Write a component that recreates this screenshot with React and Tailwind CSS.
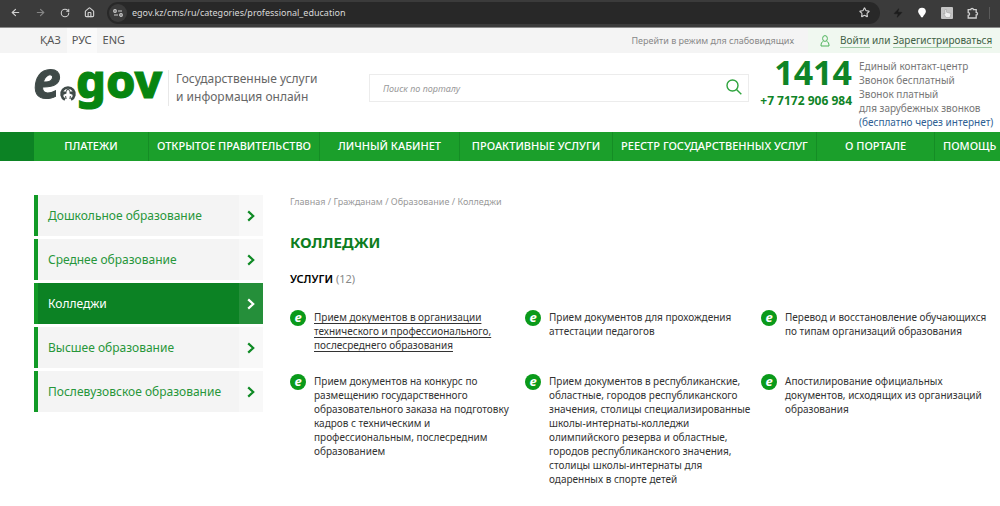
import React from "react";
import { ArrowLeft, ArrowRight, RotateCw, House, Star, Zap } from "lucide-react";

const NAV = [
  "ПЛАТЕЖИ",
  "ОТКРЫТОЕ ПРАВИТЕЛЬСТВО",
  "ЛИЧНЫЙ КАБИНЕТ",
  "ПРОАКТИВНЫЕ УСЛУГИ",
  "РЕЕСТР ГОСУДАРСТВЕННЫХ УСЛУГ",
  "О ПОРТАЛЕ",
  "ПОМОЩЬ",
];

const CATEGORIES = [
  "Дошкольное образование",
  "Среднее образование",
  "Колледжи",
  "Высшее образование",
  "Послевузовское образование",
];

const SERVICES = [
  ["Прием документов в организации", "технического и профессионального,", "послесреднего образования"],
  ["Прием документов для прохождения", "аттестации педагогов"],
  ["Перевод и восстановление обучающихся", "по типам организаций образования"],
  [
    "Прием документов на конкурс по",
    "размещению государственного",
    "образовательного заказа на подготовку",
    "кадров с техническим и",
    "профессиональным, послесредним",
    "образованием",
  ],
  [
    "Прием документов в республиканские,",
    "областные, городов республиканского",
    "значения, столицы специализированные",
    "школы-интернаты-колледжи",
    "олимпийского резерва и областные,",
    "городов республиканского значения,",
    "столицы школы-интернаты для",
    "одаренных в спорте детей",
  ],
  ["Апостилирование официальных", "документов, исходящих из организаций", "образования"],
];

function BrowserBar() {
  return (
    <div className="flex h-7 items-center border-b border-[#8a8a8a] bg-[#3b3b3b] pb-[2px] pl-[10px] text-[#d0d0d0]">
      <div className="flex w-[97px] items-center gap-[14px]">
        <button aria-label="Назад"><ArrowLeft size={11} strokeWidth={2.5} /></button>
        <button aria-label="Вперед" className="text-[#858585]"><ArrowRight size={11} strokeWidth={2.5} /></button>
        <button aria-label="Обновить"><RotateCw size={10} strokeWidth={2.5} /></button>
        <button aria-label="Домой"><House size={11} strokeWidth={2.5} /></button>
      </div>
      <div className="flex h-[22px] flex-1 items-center rounded-full bg-[#282828] pr-[10px] pl-[2px]">
        <button aria-label="Сведения о сайте" className="flex size-[18px] items-center justify-center rounded-full bg-[#3b3b3b]">
          <svg width="10" height="8" viewBox="0 0 10 8" fill="none" stroke="currentColor" strokeWidth="1.200">
            <circle cx="2" cy="2" r="1.300" />
            <path d="M5 2h4M1 6h4" />
            <circle cx="8" cy="6" r="1.300" />
          </svg>
        </button>
        <input
          aria-label="Адресная строка"
          readOnly
          value="egov.kz/cms/ru/categories/professional_education"
          className="ml-[5px] min-w-0 flex-1 bg-transparent text-[9px] text-[#d8d8d8] outline-none"
        />
        <button aria-label="Добавить в закладки"><Star size={11} strokeWidth={2.5} /></button>
      </div>
      <div className="flex w-[120px] items-center gap-[14px] pl-[13px]">
        <button aria-label="Ускорение" className="text-[#1c1c1c]"><Zap size={10} fill="currentColor" strokeWidth={1} /></button>
        <button aria-label="Местоположение">
          <svg width="10" height="11" viewBox="0 0 10 11" fill="#fff">
            <path d="M5 .8A3.900 3.900 0 0 0 1.100 4.600C1.100 6.800 3.700 8.200 4.100 10.300h1.800C6.300 8.200 8.900 6.800 8.900 4.600A3.900 3.900 0 0 0 5 .8z" />
          </svg>
        </button>
        <button aria-label="Жест">
          <svg width="12" height="12" viewBox="0 0 12 12">
            <rect width="12" height="12" rx="1" fill="#c4c4c4" />
            <path d="M4 2.500v4.500L2.500 6.500 5 10.500h4l1-4-4.500-1.300V2.500z" fill="#efefef" stroke="#999" strokeWidth=".5" />
          </svg>
        </button>
        <button aria-label="Расширения">
          <svg width="12" height="12" viewBox="0 0 12 12" fill="none" stroke="currentColor" strokeWidth="1.300">
            <path d="M1.200 2.600h2.600a1.300 1.300 0 0 1 2.600 0h2.800v2.800a1.300 1.300 0 0 1 0 2.600v3H1.200V8.400a1.400 1.400 0 0 0 0-2.800z" />
          </svg>
        </button>
        <span className="-ml-1 h-3 w-px bg-[#5a5a5a]" />
      </div>
    </div>
  );
}

function TopStrip() {
  return (
    <div className="flex h-[25px] items-stretch bg-[#f4f4f4] text-[11px] text-[#555]">
      <div className="flex items-center gap-px pl-[35px]">
        <a href="#kaz" className="px-[5px]">ҚАЗ</a>
        <a href="#rus" className="flex h-full items-center bg-[#fafafa] px-[5px]">РУС</a>
        <a href="#eng" className="px-[5px]">ENG</a>
      </div>
      <a href="#access" className="ml-auto flex items-center pr-[14px] text-[9px] text-[#888]">
        Перейти в режим для слабовидящих
      </a>
      <div className="flex w-[192px] items-center bg-[#f0f8f0] pl-[12px] text-[10px] text-[#3f5f45]">
        <svg width="10" height="12" viewBox="0 0 10 12" fill="none" stroke="#4db35a" strokeWidth="1">
          <ellipse cx="5" cy="3.500" rx="2.400" ry="2.900" />
          <path d="M3.400 6.200C1.800 7 1 8 1 11h8c0-3-.8-4-2.400-4.800" />
        </svg>
        <span className="ml-[10px] whitespace-nowrap">
          <a href="#login" className="border-b border-[#9fc9a5]">Войти</a> или{" "}
          <a href="#register" className="border-b border-[#9fc9a5]">Зарегистрироваться</a>
        </span>
      </div>
    </div>
  );
}

function Logo() {
  return (
    <svg width="128" height="50" viewBox="0 0 128 50" className="overflow-visible" role="img" aria-label="e.gov">
      <text x="-1" y="35" fontFamily="'Noto Sans'" fontWeight="700" fontStyle="italic" fontSize="50" fill="#3f4a48" stroke="#3f4a48" strokeWidth="1">e</text>
      <path
        d="M31 36.700A6.500 6.500 0 1 1 37 36.700"
        fill="none"
        stroke="#3f4a48"
        strokeWidth="2.600"
      />
      <path d="M28.500 28.500h3.300l1-2.500h2.400l1 2.500h3.300l.5 4-3 .5-.6 3h-4.800l-.6-3-3-.5z" fill="#3f4a48" />
      <path d="M34 26.500l1.500 2v2l3 1.200v1l-2.700.5-.6 4.300h-2.400l-.6-4.300-2.700-.5v-1l3-1.200v-2z" fill="#fff" />
      <text x="42" y="35" fontFamily="'Noto Sans'" fontWeight="800" fontSize="47" fill="#078510" stroke="#078510" strokeWidth="1">gov</text>
    </svg>
  );
}

function Header() {
  return (
    <header className="flex h-[79px] items-start pl-[34px]">
      <div className="flex w-[335px] items-center pt-[10px]">
        <a href="#home"><Logo /></a>
        <p className="ml-[6px] border-l border-[#e8e8e8] pl-[7px] text-[12px] leading-[18px] text-[#666]">
          Государственные услуги
          <br />
          и информация онлайн
        </p>
      </div>
      <form className="mt-[21px] flex h-7 flex-1 items-start border border-[#ececec] pt-1 pr-[6px] pl-[13px]">
        <input
          aria-label="Поиск по порталу"
          placeholder="Поиск по порталу"
          className="h-[18px] min-w-0 flex-1 bg-transparent text-[9px] italic outline-none placeholder:text-[#999]"
        />
        <button type="button" aria-label="Найти" className="text-[#2fa43e]">
          <svg width="16" height="16" viewBox="0 0 16 16" fill="none" stroke="currentColor" strokeWidth="1.400">
            <circle cx="6.500" cy="6.500" r="5.500" />
            <path d="M10.500 10.500l4.800 4.800" />
          </svg>
        </button>
      </form>
      <div className="flex w-[251px] gap-[7px] pl-[10px]">
        <div className="w-[93px] text-right font-bold whitespace-nowrap text-[#0f8427]">
          <div className="text-[34px] leading-[38px]">1414</div>
          <div className="text-[12px] leading-[20px]">+7 7172 906 984</div>
        </div>
        <p className="pt-[6px] text-[10px] leading-[14px] whitespace-nowrap text-[#777]">
          Единый контакт-центр
          <br />
          Звонок бесплатный
          <br />
          Звонок платный
          <br />
          для зарубежных звонков
          <br />
          <a href="#call" className="text-[#2f5f94]">(бесплатно через интернет)</a>
        </p>
      </div>
    </header>
  );
}

function Nav() {
  return (
    <nav className="grid h-[29px] grid-cols-[34fr_115fr_171fr_140fr_153fr_204fr_118fr_65fr] bg-[#1b9f2b] text-[11px] font-medium text-white">
      <span className="bg-[#0c8224]" />
      {NAV.map((item) => (
        <a
          key={item}
          href="#nav"
          className="flex min-w-0 items-center justify-center border-r border-[#158d25] whitespace-nowrap last:justify-start last:border-r-0 last:pl-2"
        >
          {item}
        </a>
      ))}
    </nav>
  );
}

function Sidebar() {
  return (
    <aside className="flex w-[229px] flex-col gap-[3px]">
      {CATEGORIES.map((name) => {
        const active = name === "Колледжи";
        return (
          <a
            key={name}
            href="#category"
            className={
              "flex h-[41px] items-center border-l-4 border-[#119a26] pl-[10px] text-[12px] " +
              (active ? "bg-[#0c8224] text-white" : "bg-[#f4f4f4] text-[#27963a]")
            }
          >
            <span className="flex-1 whitespace-nowrap">{name}</span>
            <span
              className={
                "flex h-full w-6 items-center justify-center " +
                (active ? "bg-[#258f3a] text-white" : "bg-[#f8f8f8] text-[#0f8a25]")
              }
            >
              <svg width="8" height="12" viewBox="0 0 8 12" fill="none" stroke="currentColor" strokeWidth="2.200">
                <path d="M1.200 1.400L6.200 6l-5 4.600" />
              </svg>
            </span>
          </a>
        );
      })}
    </aside>
  );
}

function Badge() {
  return (
    <svg width="16" height="16" viewBox="0 0 16 16" className="shrink-0 overflow-visible" aria-hidden="true">
      <circle cx="8" cy="8" r="8" fill="#0a9a1a" />
      <text x="8" y="11.500" textAnchor="middle" fontFamily="'Noto Sans'" fontWeight="700" fontStyle="italic" fontSize="13" fill="#fff">e</text>
    </svg>
  );
}

export default function App() {
  return (
    <div className="min-h-screen overflow-x-hidden bg-white font-['Noto_Sans',sans-serif]">
      <BrowserBar />
      <TopStrip />
      <Header />
      <Nav />
      <div className="flex gap-[27px] pt-[34px] pl-[34px]">
        <Sidebar />
        <main className="min-w-0 flex-1">
          <nav className="text-[9px] leading-[14px] text-[#999]">
            <a href="#main">Главная</a> / <a href="#citizens">Гражданам</a> / <a href="#education">Образование</a> / <span>Колледжи</span>
          </nav>
          <h1 className="mt-[20px] text-[15px] leading-[26px] font-bold text-[#0d7d20]">КОЛЛЕДЖИ</h1>
          <h2 className="mt-[16px] text-[11px] leading-[16px] font-semibold text-black">
            УСЛУГИ <span className="font-normal text-[#888]">(12)</span>
          </h2>
          <ul className="mt-[23px] grid grid-cols-[235fr_236fr_239fr] gap-y-[22px]">
            {SERVICES.map((lines, i) => (
              <li key={i} className="flex min-w-0 items-start gap-2">
                <Badge />
                <a
                  href="#service"
                  className={
                    "text-[10px] leading-[14px] whitespace-pre-line text-[#333] " +
                    (i === 0 ? "underline underline-offset-2" : "")
                  }
                >
                  {lines.join("\n")}
                </a>
              </li>
            ))}
          </ul>
        </main>
      </div>
    </div>
  );
}
